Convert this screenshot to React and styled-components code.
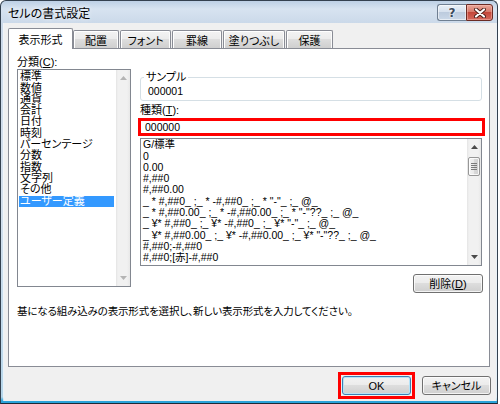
import React from 'react';
import styled, { createGlobalStyle } from 'styled-components';

const UI = `"Liberation Sans", "Noto Sans CJK JP", sans-serif`;

const Global = createGlobalStyle`
  html, body { margin: 0; padding: 0; background: #fff; }
  body { font-family: ${UI}; }
  * { box-sizing: border-box; }
`;

const Window = styled.div`
  width: 498px;
  height: 404px;
  border: 1px solid #34414f;
  border-bottom-color: #1d2a36;
  border-radius: 6px 6px 0 0;
  background: linear-gradient(
    to bottom,
    #bdd0e5 0px,
    #d7e3f0 8px,
    #cbd9e9 22px,
    #d3dfec 200px,
    #b7d6ea calc(100% - 6px),
    #2aa3da calc(100% - 2px)
  );
  padding: 0 1px 2px 3px;
  display: flex;
  flex-direction: column;
  overflow: hidden;
`;

const TitleBar = styled.div`
  height: 22px;
  display: flex;
  align-items: flex-start;
  flex: none;
`;

const Title = styled.div`
  padding: 5px 0 0 4px;
  font-family: "Noto Sans CJK JP", sans-serif;
  font-feature-settings: "palt";
  font-size: 12px;
  line-height: 14px;
  color: #000;
  text-shadow: 0 0 5px rgba(255, 255, 255, 0.9);
`;

const CaptionButtons = styled.div`
  margin: 3px 3px 0 auto;
  display: flex;
`;

const HelpButton = styled.div`
  width: 29px;
  height: 17px;
  border: 1px solid #6f7f92;
  border-right: none;
  border-radius: 3px 0 0 3px;
  background: linear-gradient(#e9f0f8 0%, #d6e1ee 45%, #bccbde 50%, #cad8e8 100%);
  box-shadow: inset 0 0 0 1px rgba(255, 255, 255, 0.55);
  display: flex;
  align-items: center;
  justify-content: center;
  font-family: "DejaVu Sans", sans-serif;
  font-weight: bold;
  font-size: 12px;
  line-height: 12px;
  color: #3b4a5c;
  text-shadow: 0 0 2px #fff, 0 0 2px #fff;
`;

const CloseButton = styled.div`
  width: 27px;
  height: 17px;
  border: 1px solid #6a2b24;
  border-radius: 0 3px 3px 0;
  background: linear-gradient(#eaa89a 0%, #d77a6c 45%, #c4473a 50%, #d4695d 100%);
  box-shadow: inset 0 0 0 1px rgba(255, 200, 190, 0.45);
  display: flex;
  align-items: center;
  justify-content: center;
`;

const Client = styled.div`
  flex: 1;
  background: #f0f0f0;
  display: flex;
  flex-direction: column;
  font-family: ${UI};
  font-size: 11px;
  font-feature-settings: "palt";
  color: #000;
  box-shadow: -1px 0 0 rgba(255, 255, 255, 0.7), 1px 0 0 rgba(255, 255, 255, 0.6);
`;

const TabStrip = styled.div`
  display: flex;
  align-items: flex-end;
  height: 20px;
  margin-top: 5px;
  padding-left: 4px;
  position: relative;
  z-index: 1;
`;

const Tab = styled.div`
  width: ${(p) => p.$w}px;
  height: ${(p) => (p.$active ? 21 : 18)}px;
  margin-left: ${(p) => p.$gap}px;
  margin-bottom: ${(p) => (p.$active ? -1 : 0)}px;
  border: 1px solid #898c95;
  border-bottom: none;
  border-radius: 2px 2px 0 0;
  background: ${(p) =>
    p.$active ? '#fff' : 'linear-gradient(#f3f3f3 0%, #ebebeb 50%, #dddddd 50%, #cfcfcf 100%)'};
  box-shadow: ${(p) => (p.$active ? 'none' : 'inset 1px 1px 0 #fff, inset -1px 0 0 #fbfbfb')};
  display: flex;
  justify-content: center;
  padding-top: ${(p) => (p.$active ? 5 : 4)}px;
  line-height: 12px;
  white-space: nowrap;
`;

const Panel = styled.div`
  margin-left: 4px;
  width: 482px;
  height: 319px;
  border: 1px solid #898c95;
  background: #fff;
  padding: 7px 0 0 8px;
  display: flex;
  flex-direction: column;
`;

const Columns = styled.div`
  display: flex;
  gap: 9px;
  align-items: flex-start;
`;

const LeftCol = styled.div`
  width: 114px;
  display: flex;
  flex-direction: column;
`;

const RightCol = styled.div`
  width: 342px;
  display: flex;
  flex-direction: column;
`;

const Label = styled.div`
  line-height: 12px;
  height: 12px;
  margin-top: ${(p) => p.$mt || 0}px;
  white-space: nowrap;
`;

const ListBox = styled.div`
  width: ${(p) => p.$w}px;
  height: ${(p) => p.$h}px;
  margin-top: ${(p) => p.$mt || 0}px;
  border: 1px solid #828790;
  background: #fff;
  display: flex;
  overflow: hidden;
`;

const Items = styled.div`
  flex: 1;
  padding: ${(p) => p.$pad};
  overflow: hidden;
  font-size: ${(p) => p.$fs}px;
`;

const Item = styled.div`
  height: 11.3px;
  line-height: 11.3px;
  padding-left: ${(p) => p.$pl}px;
  white-space: pre;
  background: ${(p) => (p.$sel ? '#3399ff' : 'transparent')};
  color: ${(p) => (p.$sel ? '#fff' : '#000')};
`;

const ScrollBar = styled.div`
  width: 14px;
  flex: none;
  display: flex;
  flex-direction: column;
  background: linear-gradient(to right, #e4e4e4 0, #f1f1f1 2px, #f1f1f1 11px, #e8e8e8 100%);
`;

const ArrowBtn = styled.div`
  height: 16px;
  flex: none;
  display: flex;
  align-items: center;
  justify-content: center;
`;

const Track = styled.div`
  flex: 1;
  padding: 2px 0 0 1px;
`;

const Thumb = styled.div`
  width: 12px;
  height: 19px;
  border: 1px solid #979797;
  border-radius: 2px;
  background: linear-gradient(to right, #f4f4f4 0%, #e9e9e9 50%, #d9d9d9 51%, #d0d0d0 100%);
  box-shadow: inset 0 0 0 1px rgba(255, 255, 255, 0.8);
  display: flex;
  align-items: center;
  justify-content: center;
`;

const GroupBox = styled.fieldset`
  margin: 15px 0 0 0;
  padding: 2px 7px 3px 7px;
  border: 1px solid #d5dfe5;
  border-radius: 3px;
  min-width: 0;
`;

const Legend = styled.legend`
  margin-left: -4px;
  padding: 0 2px;
  line-height: 12px;
  font-size: 11px;
`;

const SampleText = styled.div`
  line-height: 12px;
  height: 12px;
  font-size: 10.5px;
`;

const HighlightFrame = styled.div`
  width: 347px;
  height: 18px;
  margin: 2px 0 0 -2px;
  border: 3px solid #ff0000;
  background: #fff;
  padding-left: 4px;
  line-height: 12px;
  font-size: 10.5px;
`;

const Button = styled.button`
  width: ${(p) => p.$w}px;
  height: 19px;
  padding: 0;
  border: 1px solid ${(p) => (p.$default ? '#3c7fb1' : '#707070')};
  border-radius: 3px;
  background: linear-gradient(#f3f3f3 0%, #ebebeb 50%, #dddddd 50%, #cfcfcf 100%);
  box-shadow: inset 0 0 0 1px ${(p) => (p.$default ? '#b5e3f9' : 'rgba(255,255,255,0.75)')};
  font-family: ${UI};
  font-feature-settings: "palt";
  font-size: 11px;
  line-height: 12px;
  color: #000;
  display: flex;
  align-items: center;
  justify-content: center;
`;

const DeleteRow = styled.div`
  display: flex;
  justify-content: flex-end;
  margin: 8px -1px 0 0;
`;

const Description = styled.div`
  margin-top: 12px;
  line-height: 12px;
  font-size: 10.5px;
  letter-spacing: -0.15px;
  white-space: nowrap;
`;

const ButtonRow = styled.div`
  display: flex;
  justify-content: flex-end;
  align-items: center;
  gap: 7px;
  margin-top: 5px;
  padding-right: 5px;
`;

const RedBox = styled.div`
  border: 3px solid #ff0000;
  padding: 1px;
  display: flex;
`;

const Arrow = ({ up, color }) => (
  <svg width="7" height="4" viewBox="0 0 7 4">
    <path d={up ? 'M0 4 L3.5 0 L7 4 Z' : 'M0 0 L3.5 4 L7 0 Z'} fill={color} />
  </svg>
);

const Grip = () => (
  <svg width="6" height="7" viewBox="0 0 6 7">
    <path d="M0 0.5 H6 M0 2.5 H6 M0 4.5 H6 M0 6.5 H6" stroke="#7a7a7a" strokeWidth="1" />
  </svg>
);

const CloseX = () => (
  <svg width="12" height="10" viewBox="0 0 12 10">
    <path d="M2 1.5 L10 8.5 M10 1.5 L2 8.5" stroke="#4a1d18" strokeWidth="4" strokeLinecap="round" />
    <path d="M2 1.5 L10 8.5 M10 1.5 L2 8.5" stroke="#fff" strokeWidth="2.2" strokeLinecap="round" />
  </svg>
);

const categories = [
  '標準', '数値', '通貨', '会計', '日付', '時刻', 'パーセンテージ',
  '分数', '指数', '文字列', 'その他', 'ユーザー定義',
];

const formats = [
  'G/標準',
  '0',
  '0.00',
  '#,##0',
  '#,##0.00',
  '_ * #,##0_ ;_ * -#,##0_ ;_ * "-"_ ;_ @_ ',
  '_ * #,##0.00_ ;_ * -#,##0.00_ ;_ * "-"??_ ;_ @_ ',
  '_ ¥* #,##0_ ;_ ¥* -#,##0_ ;_ ¥* "-"_ ;_ @_ ',
  '_ ¥* #,##0.00_ ;_ ¥* -#,##0.00_ ;_ ¥* "-"??_ ;_ @_ ',
  '#,##0;-#,##0',
  '#,##0;[赤]-#,##0',
];

const tabs = [
  { t: '表示形式', w: 65, gap: 0, active: true },
  { t: '配置', w: 46, gap: 0 },
  { t: 'フォント', w: 51, gap: 1 },
  { t: '罫線', w: 50, gap: 1 },
  { t: '塗りつぶし', w: 62, gap: 1 },
  { t: '保護', w: 47, gap: 1 },
];

export default function App() {
  return (
    <>
      <Global />
      <Window>
        <TitleBar>
          <Title>セルの書式設定</Title>
          <CaptionButtons>
            <HelpButton>?</HelpButton>
            <CloseButton>
              <CloseX />
            </CloseButton>
          </CaptionButtons>
        </TitleBar>
        <Client>
          <TabStrip>
            {tabs.map((tb) => (
              <Tab key={tb.t} $w={tb.w} $gap={tb.gap} $active={tb.active}>
                {tb.t}
              </Tab>
            ))}
          </TabStrip>
          <Panel>
            <Columns>
              <LeftCol>
                <Label>
                  分類(<u>C</u>):
                </Label>
                <ListBox $w={114} $h={218} $mt={1}>
                  <Items $pad="1.3px 2px 0 1px" $fs={11}>
                    {categories.map((c, i) => (
                      <Item key={c} $pl={1} $sel={i === categories.length - 1}>
                        {c}
                      </Item>
                    ))}
                  </Items>
                  <ScrollBar>
                    <ArrowBtn>
                      <Arrow up color="#b4b4b4" />
                    </ArrowBtn>
                    <Track />
                    <ArrowBtn>
                      <Arrow color="#b4b4b4" />
                    </ArrowBtn>
                  </ScrollBar>
                </ListBox>
              </LeftCol>
              <RightCol>
                <GroupBox>
                  <Legend>サンプル</Legend>
                  <SampleText>000001</SampleText>
                </GroupBox>
                <Label $mt={3}>
                  種類(<u>T</u>):
                </Label>
                <HighlightFrame>000000</HighlightFrame>
                <ListBox $w={342} $h={128} $mt={2}>
                  <Items $pad="0.3px 0 0 2px" $fs={10.5}>
                    {formats.map((f) => (
                      <Item key={f} $pl={0}>
                        {f}
                      </Item>
                    ))}
                  </Items>
                  <ScrollBar>
                    <ArrowBtn>
                      <Arrow up color="#4a4a4a" />
                    </ArrowBtn>
                    <Track>
                      <Thumb>
                        <Grip />
                      </Thumb>
                    </Track>
                    <ArrowBtn>
                      <Arrow color="#4a4a4a" />
                    </ArrowBtn>
                  </ScrollBar>
                </ListBox>
                <DeleteRow>
                  <Button $w={70}>
                    削除(<u>D</u>)
                  </Button>
                </DeleteRow>
              </RightCol>
            </Columns>
            <Description>
              基になる組み込みの表示形式を選択し、新しい表示形式を入力してください。
            </Description>
          </Panel>
          <ButtonRow>
            <RedBox>
              <Button $w={69} $default>
                OK
              </Button>
            </RedBox>
            <Button $w={69}>キャンセル</Button>
          </ButtonRow>
        </Client>
      </Window>
    </>
  );
}
